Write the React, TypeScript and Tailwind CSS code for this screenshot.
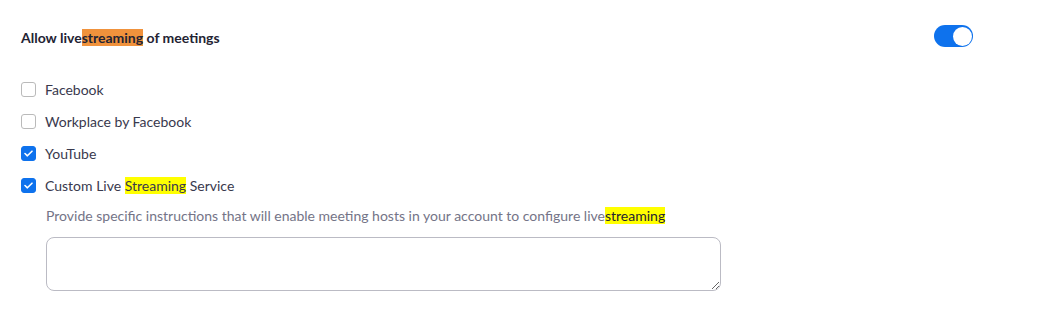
import React, { useState } from 'react';

const font = { fontFamily: 'Lato, "Open Sans", sans-serif' };

const Checkbox = ({ checked, onChange }: { checked: boolean; onChange: () => void }) => (
  <button
    onClick={onChange}
    className={`w-[15px] h-[15px] rounded-[3px] flex items-center justify-center shrink-0 ${
      checked ? 'bg-[#0e72ed] border border-[#0e72ed]' : 'bg-white border border-[#bababa]'
    }`}
  >
    {checked && (
      <svg width="9" height="7" viewBox="0 0 9 7" fill="none">
        <path d="M1 3.5L3.4 5.8L8 1.2" stroke="white" strokeWidth="1.6" strokeLinecap="round" strokeLinejoin="round" />
      </svg>
    )}
  </button>
);

export default function App() {
  const [enabled, setEnabled] = useState(true);
  const [options, setOptions] = useState([
    { label: 'Facebook', checked: false },
    { label: 'Workplace by Facebook', checked: false },
    { label: 'YouTube', checked: true },
    { label: 'Custom Live Streaming Service', checked: true },
  ]);

  const toggle = (i: number) =>
    setOptions(options.map((o, idx) => (idx === i ? { ...o, checked: !o.checked } : o)));

  return (
    <div className="w-[1063px] h-[322px] bg-white text-[#232333]" style={font}>
      <div className="pl-[21px] pr-[90px] pt-[25px]">
        {/* Header */}
        <div className="flex items-start justify-between h-[24px]">
          <span className="mt-[2px] text-[14px] font-bold leading-[22px]">
            Allow live<mark className="bg-[#f0923c] text-[#232333]">streaming</mark> of meetings
          </span>
          <button
            onClick={() => setEnabled(!enabled)}
            className={`w-[39px] h-[22px] rounded-full flex items-center px-[1.5px] ${
              enabled ? 'bg-[#0e72ed] justify-end' : 'bg-[#bababa] justify-start'
            }`}
          >
            <span className="w-[19px] h-[19px] rounded-full bg-white" />
          </button>
        </div>

        {/* Options */}
        <div className="mt-[31px] flex flex-col gap-[13px]">
          {options.map((o, i) => (
            <label key={o.label} className="flex items-center gap-[9px] h-[19px] text-[14px] text-[#39394d]">
              <Checkbox checked={o.checked} onChange={() => toggle(i)} />
              {o.label === 'Custom Live Streaming Service' ? (
                <span>
                  Custom Live <mark className="bg-[#ffff00] text-[#39394d]">Streaming</mark> Service
                </span>
              ) : (
                <span>{o.label}</span>
              )}
            </label>
          ))}
        </div>

        {/* Custom service instructions */}
        <div className="pl-[25px] mt-[11px]">
          <p className="text-[14px] leading-[20px] text-[#747487]">
            Provide specific instructions that will enable meeting hosts in your account to configure live
            <mark className="bg-[#ffff00] text-[#232333]">streaming</mark>
          </p>
          <textarea className="mt-[11px] block w-[675px] h-[54px] border border-[#bbbbc4] rounded-[8px] outline-none px-2 py-1 text-[13px]" />
        </div>
      </div>
    </div>
  );
}
